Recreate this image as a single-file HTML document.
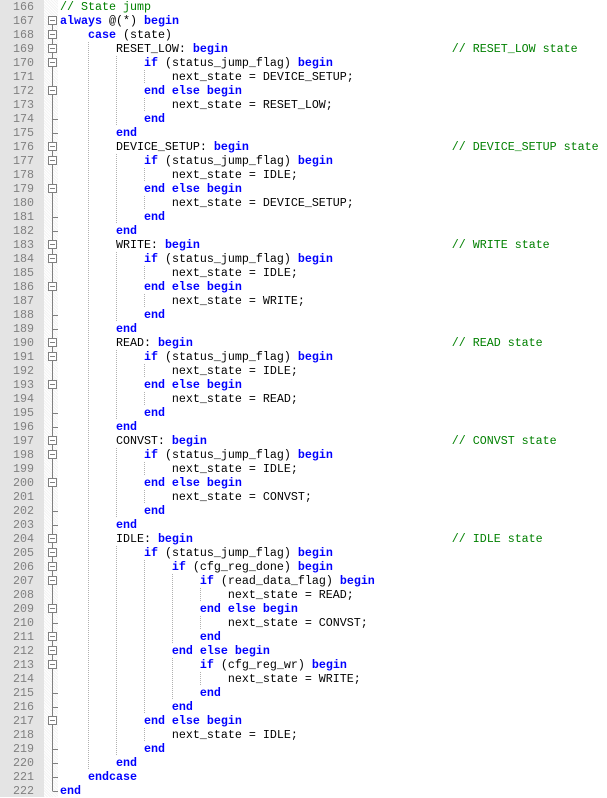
<!DOCTYPE html>
<html><head><style>
body{margin:0;width:607px;height:797px;overflow:hidden;background:#fff;position:relative;font-family:"Liberation Mono",monospace;font-size:11.67px;}
#gut{position:absolute;left:0;top:0;width:44px;height:797px;background:#e4e4e4;}
#fold{position:absolute;left:44px;top:0;width:14px;height:797px;background:repeating-linear-gradient(45deg,#f3f3f3 0 1px,#fff 1px 2px);}
.ln{position:absolute;left:0;width:34px;text-align:right;color:#808080;height:14px;line-height:14px;}
.c{position:absolute;left:60px;white-space:pre;height:14px;line-height:14px;color:#000;}
b{color:#0000ff;font-weight:bold}
i{color:#008000;font-style:normal}
svg{position:absolute;left:0;top:0}
</style></head><body>
<div id="gut"></div><div id="fold"></div>
<svg width="607" height="797" id="gd"></svg>
<div id="code"></div>
<svg width="607" height="797" id="sv"></svg>
<script>
const L=[
"<i>// State jump</i>",
"<b>always</b> @(*) <b>begin</b>",
"    <b>case</b> (state)",
"        RESET_LOW: <b>begin</b>                                <i>// RESET_LOW state</i>",
"            <b>if</b> (status_jump_flag) <b>begin</b>",
"                next_state = DEVICE_SETUP;",
"            <b>end else begin</b>",
"                next_state = RESET_LOW;",
"            <b>end</b>",
"        <b>end</b>",
"        DEVICE_SETUP: <b>begin</b>                             <i>// DEVICE_SETUP state</i>",
"            <b>if</b> (status_jump_flag) <b>begin</b>",
"                next_state = IDLE;",
"            <b>end else begin</b>",
"                next_state = DEVICE_SETUP;",
"            <b>end</b>",
"        <b>end</b>",
"        WRITE: <b>begin</b>                                    <i>// WRITE state</i>",
"            <b>if</b> (status_jump_flag) <b>begin</b>",
"                next_state = IDLE;",
"            <b>end else begin</b>",
"                next_state = WRITE;",
"            <b>end</b>",
"        <b>end</b>",
"        READ: <b>begin</b>                                     <i>// READ state</i>",
"            <b>if</b> (status_jump_flag) <b>begin</b>",
"                next_state = IDLE;",
"            <b>end else begin</b>",
"                next_state = READ;",
"            <b>end</b>",
"        <b>end</b>",
"        CONVST: <b>begin</b>                                   <i>// CONVST state</i>",
"            <b>if</b> (status_jump_flag) <b>begin</b>",
"                next_state = IDLE;",
"            <b>end else begin</b>",
"                next_state = CONVST;",
"            <b>end</b>",
"        <b>end</b>",
"        IDLE: <b>begin</b>                                     <i>// IDLE state</i>",
"            <b>if</b> (status_jump_flag) <b>begin</b>",
"                <b>if</b> (cfg_reg_done) <b>begin</b>",
"                    <b>if</b> (read_data_flag) <b>begin</b>",
"                        next_state = READ;",
"                    <b>end else begin</b>",
"                        next_state = CONVST;",
"                    <b>end</b>",
"                <b>end else begin</b>",
"                    <b>if</b> (cfg_reg_wr) <b>begin</b>",
"                        next_state = WRITE;",
"                    <b>end</b>",
"                <b>end</b>",
"            <b>end else begin</b>",
"                next_state = IDLE;",
"            <b>end</b>",
"        <b>end</b>",
"    <b>endcase</b>",
"<b>end</b>"];
let h="",g="";
L.forEach((s,i)=>{h+=`<div class="ln" style="top:${i*14}px">${166+i}</div><div class="c" style="top:${i*14}px">${s}</div>`;
 const ind=s.match(/^ */)[0].length;
 for(let k=4;k<ind;k+=4){const x=60+k*7+0.5;g+=`<line x1="${x}" y1="${i*14}" x2="${x}" y2="${i*14+14}" stroke="#b0b0b0" stroke-dasharray="1,1"/>`;}
});
document.getElementById('code').innerHTML=h;
document.getElementById('gd').innerHTML=g;
const boxes=[167,168,169,170,172,176,177,179,183,184,186,190,191,193,197,198,200,204,205,206,207,209,211,212,213,217];
const ends=[174,175,181,182,188,189,195,196,202,203,210,215,216,219,220,221];
let s=`<line x1="52.5" y1="${(167-166)*14+11}" x2="52.5" y2="${56*14+7}" stroke="#808080"/>`;
s+=`<line x1="52.5" y1="${56*14+7.5}" x2="58" y2="${56*14+7.5}" stroke="#808080"/>`;
ends.forEach(n=>{let y=(n-166)*14+7.5;s+=`<line x1="52.5" y1="${y}" x2="58" y2="${y}" stroke="#808080"/>`;});
boxes.forEach(n=>{let y=(n-166)*14+3;s+=`<rect x="48.5" y="${y-0.5}" width="8" height="8" fill="#fff" stroke="#808080"/><line x1="50" y1="${y+3.5}" x2="55" y2="${y+3.5}" stroke="#808080"/>`;});
document.getElementById('sv').innerHTML=s;
</script>
</body></html>
